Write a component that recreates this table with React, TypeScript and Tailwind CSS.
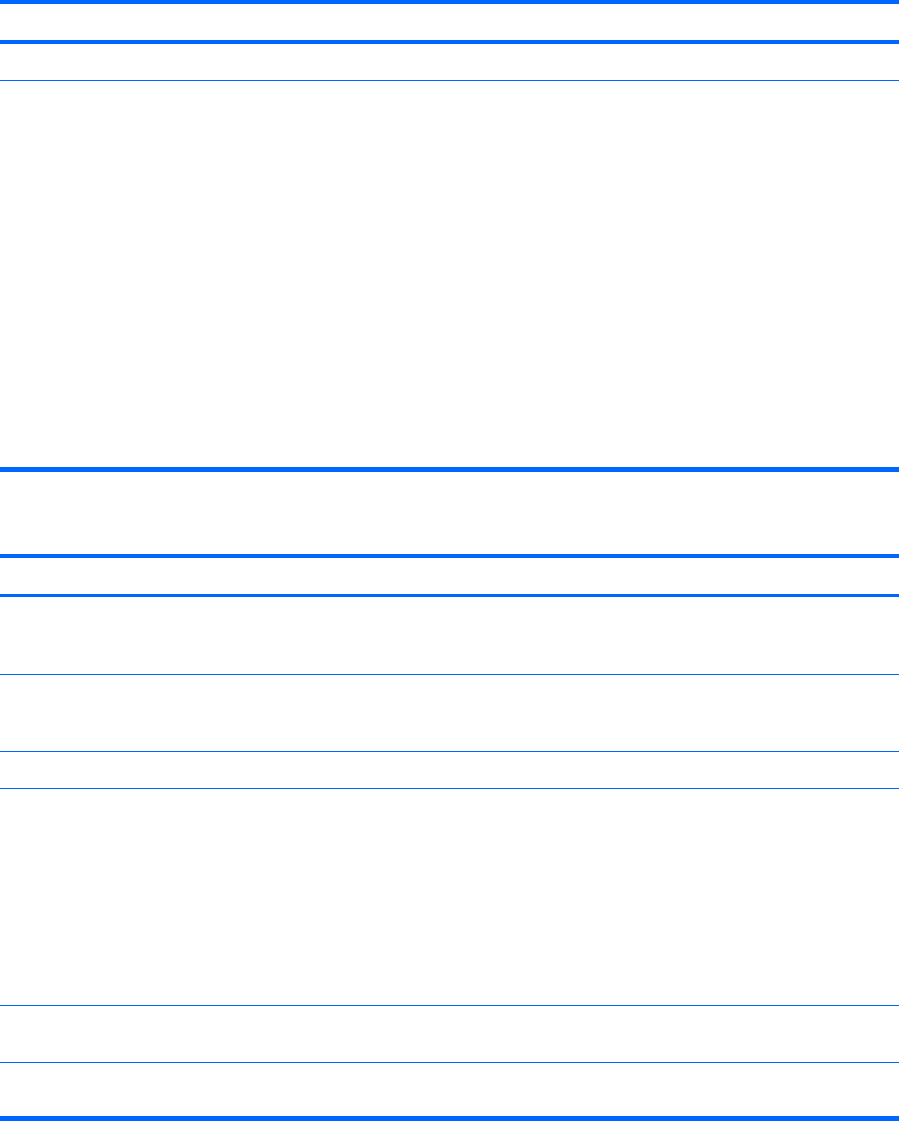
export default function App() {
  const line = "w-[899px] bg-[#0066ff]";
  return (
    <div className="w-[900px] h-[1122px] bg-white flex flex-col">
      <div className={`${line} h-[4px]`} />
      <div className={`${line} h-[4px] mt-[36px]`} />
      <div className={`${line} h-[1px] mt-[36px]`} />
      <div className={`${line} h-[5px] mt-[386px]`} />
      <div className={`${line} h-[4px] mt-[82px]`} />
      <div className={`${line} h-[3px] mt-[36px]`} />
      <div className={`${line} h-[1px] mt-[77px]`} />
      <div className={`${line} h-[1px] mt-[76px]`} />
      <div className={`${line} h-[1px] mt-[36px]`} />
      <div className={`${line} h-[1px] mt-[216px]`} />
      <div className={`${line} h-[1px] mt-[56px]`} />
      <div className={`${line} h-[5px] mt-[53px]`} />
    </div>
  );
}
